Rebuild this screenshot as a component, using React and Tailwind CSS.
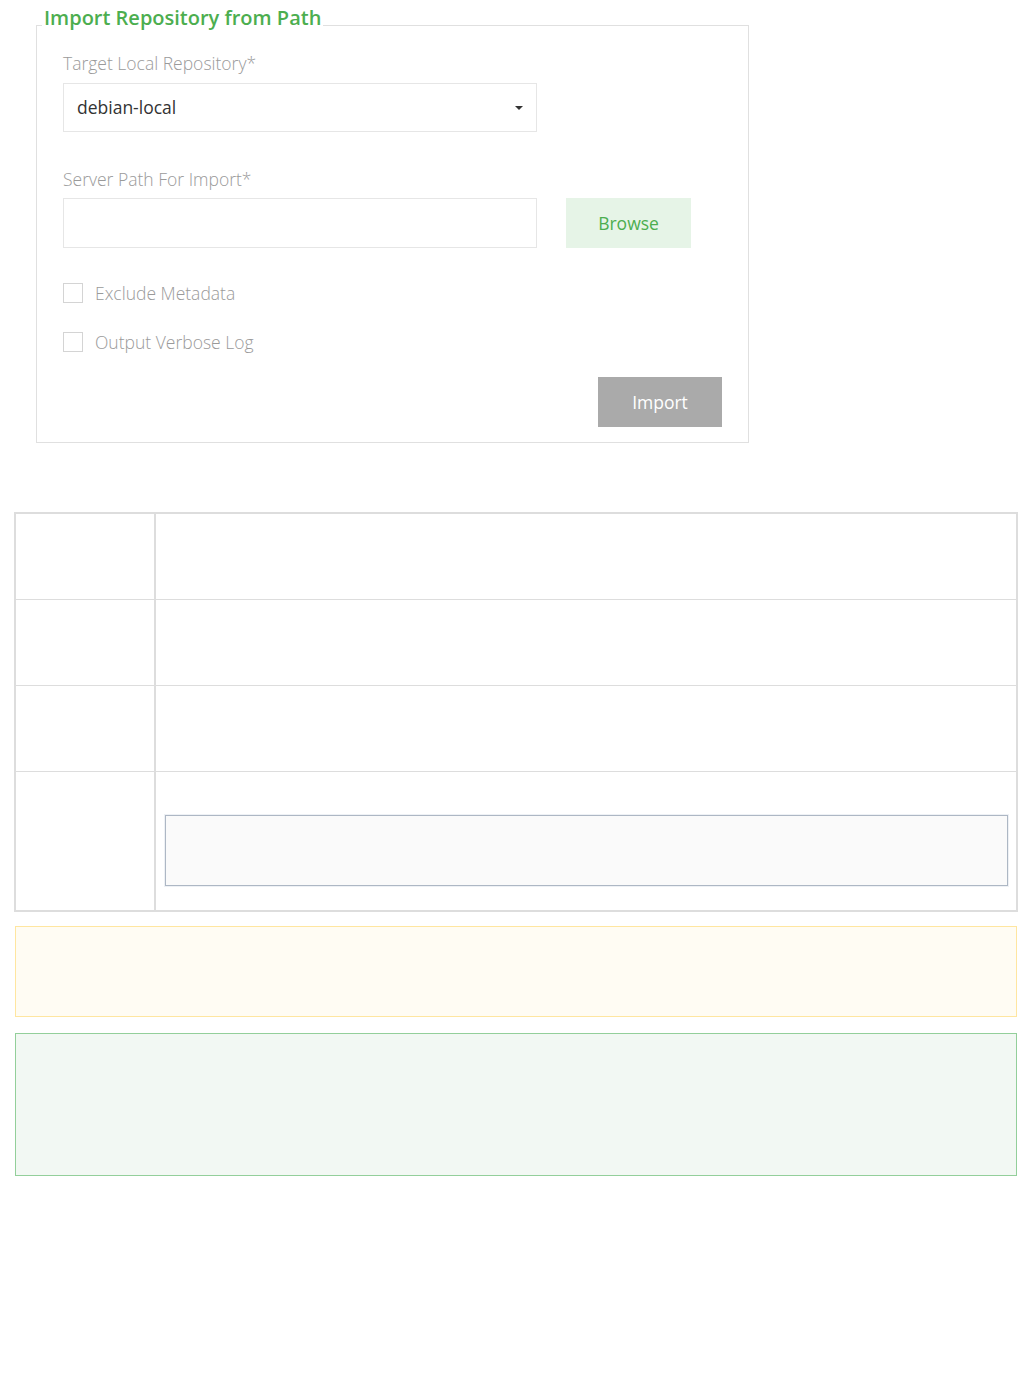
import React from 'react';

const font = { fontFamily: '"Open Sans", "Liberation Sans", sans-serif' };

const Checkbox = ({ label }) => (
  <label className="flex items-center h-[20px] cursor-pointer">
    <span className="w-[20px] h-[20px] border border-[#d4d4d4] bg-white" />
    <span className="ml-[12px] text-[17.5px] font-light text-[#9a9a9a] leading-[20px]">{label}</span>
  </label>
);

export default function App() {
  return (
    <div className="min-h-[1392px] bg-white text-[#333]" style={font}>
      {/* Import form */}
      <div className="pt-[5px] pl-[36px]">
        <fieldset className="w-[713px] border border-[#e0e0e0] px-[26px] pb-[15px]">
          <legend className="-ml-[21px] px-[2px] pb-[15px] text-[20px] leading-[25px] font-semibold text-[#4cae4f]">
            Import Repository from Path
          </legend>

          <div className="mt-[6px] text-[17.5px] leading-[24px] font-light text-[#9a9a9a]">Target Local Repository*</div>
          <div className="mt-[8px] w-[474px] h-[49px] border border-[#e6e6e6] flex items-center justify-between pl-[13px] pr-[13px]">
            <span className="text-[17.5px] text-[#333]">debian-local</span>
            <span className="w-0 h-0 border-l-[4px] border-r-[4px] border-t-[4px] border-l-transparent border-r-transparent border-t-[#333]" />
          </div>

          <div className="mt-[35px] text-[17.5px] leading-[24px] font-light text-[#9a9a9a]">Server Path For Import*</div>
          <div className="mt-[7px] flex items-center gap-[29px]">
            <div className="w-[474px] h-[50px] border border-[#e6e6e6]" />
            <button className="w-[125px] h-[50px] bg-[#e6f4e7] text-[#4cae4f] text-[17.5px]">Browse</button>
          </div>

          <div className="mt-[35px] flex flex-col gap-[29px]">
            <Checkbox label="Exclude Metadata" />
            <Checkbox label="Output Verbose Log" />
          </div>

          <div className="mt-[25px] flex justify-end">
            <button className="w-[124px] h-[50px] bg-[#aaaaaa] text-white text-[17.5px]">Import</button>
          </div>
        </fieldset>
      </div>

      {/* Details table */}
      <div className="mt-[69px] ml-[14px] w-[1004px] border-2 border-[#dddddd]">
        {[0, 1, 2].map((i) => (
          <div key={i} className="flex h-[86px] border-b border-[#dddddd]">
            <div className="w-[140px] border-r-2 border-[#dddddd]" />
            <div className="flex-1" />
          </div>
        ))}
        <div className="flex h-[138px]">
          <div className="w-[140px] border-r-2 border-[#dddddd]" />
          <div className="flex-1 pt-[43px] pl-[9px] pr-[8px]">
            <div className="h-[71px] bg-[#fafafa] border border-[#adb7c4] shadow-[0_0_0_1px_#eef1f5]" />
          </div>
        </div>
      </div>

      {/* Warning box */}
      <div className="mt-[14px] ml-[15px] w-[1002px] h-[91px] bg-[#fffcf3] border-[1.5px] border-[#ffe6a0]" />

      {/* Success box */}
      <div className="mt-[16px] ml-[15px] w-[1002px] h-[143px] bg-[#f2f8f3] border-[1.5px] border-[#93cf9a]" />
    </div>
  );
}
